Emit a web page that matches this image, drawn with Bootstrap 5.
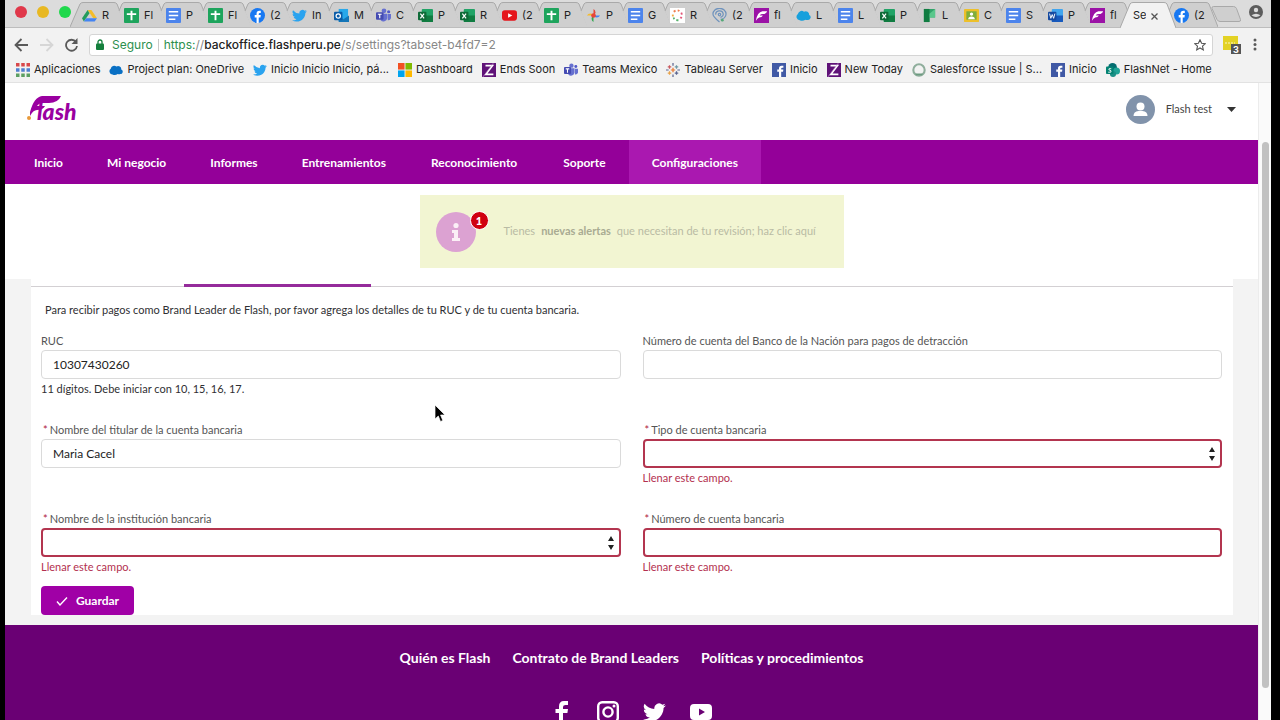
<!DOCTYPE html>
<html lang="es">
<head>
<meta charset="utf-8">
<meta name="viewport" content="width=device-width, initial-scale=1">
<title>Configuraciones</title>
<link rel="stylesheet" href="https://cdn.jsdelivr.net/npm/bootstrap@5.3.0/dist/css/bootstrap.min.css">
<style>
body{font-family:Lato,"Liberation Sans",sans-serif;font-size:12px;color:#2f2f33;background:#000}
a{text-decoration:none;color:inherit}
.win{height:100vh;margin:0 9px 0 5px;overflow:hidden;background:#fff}
/* browser window */
.chrome{font-family:Inter,"Liberation Sans",sans-serif;background:#f2f2f2;border-bottom:1px solid #e2e2e2;font-size:11px;color:#222}
.strip{height:28px;background:#dcdcdc;border-bottom:1px solid #bdbdbd}
.lights{width:67px;gap:10px;padding:0 0 4px 10px}
.lights i{width:12px;height:12px;border-radius:50%}
.tabitem{position:relative;flex:0 1 42px;min-width:0;height:27px;padding:4px 0 0 10px;gap:5px}
.tabitem .shape{position:absolute;left:-2px;top:0;width:56px;height:27px}
.tabitem .fav{position:relative}
.tabitem .ttl{position:relative;width:11px;overflow:hidden;white-space:nowrap;font-size:11px}
.tabitem.on{z-index:2;padding-left:11px}
.tabitem.on .shape{height:28px}
.tabitem.on .ttl{width:13px}
.tabitem.on button{position:relative;border:0;background:none;padding:0;line-height:1}
.fav{width:15px;height:15px;flex:none}
.tools{height:33px;padding:0 14px 0 9px;gap:10px}
.tools button,.who{border:0;background:none;padding:0;line-height:0}
.urlbar{height:22px;background:#fff;border:1px solid #d5d5d5;border-radius:3px;padding:0 6px;font-size:12px}
.urlbar .vr{margin:4px 5px}
.urlbar a{color:#888}.urlbar b{font-weight:500;color:#222}.ok{color:#2c8f4e}
.marks{height:21px;padding:0 11px 4px;gap:9px;white-space:nowrap}
.marks a{gap:4px}
.marks .fav{width:14px;height:14px}
/* site */
.pane{min-width:0}
.sitehead{height:57px;padding:0 22px 5px 22px}
.account{font-size:11px;color:#444}
.account span{margin:0 15px 0 11px}
.sitenav{background:#940099;height:44px;padding-left:7px}
.sitenav .nav-link{color:#fff;font-weight:700;font-size:12px;padding:1px 22px 0;border-radius:0;line-height:43px}
.sitenav .nav-link:nth-child(n+5){padding:1px 23px 0}
.sitenav .nav-link.active{background:#aa18b0}
.notice{width:424px;height:73px;background:#f2f5d2;margin:11px auto;padding:0 16px;color:#b9bba4;font-size:11px}
.notice b{color:#a9ab92;margin:0 6px}
.info-ic{position:relative;width:40px;height:40px;margin-right:28px}
.count{position:absolute;right:-13px;top:-1px;width:19px;height:19px;border-radius:50%;background:#d00010;color:#fff;border:1px solid #fff;font-size:11px;font-weight:900;line-height:17px;text-align:center}
.ground{background:#f3f3f3}
.sheet{margin:0 25px 10px 26px;background:#fff}
.tabrow{height:8px;border-bottom:1px solid #d3d0d3}
.tabrow i{display:block;width:187px;height:3px;margin-top:5px;background:#952b9b}
.sheet form{padding:14px 11px 0 10px}
.lead-in{line-height:18px;padding-left:4px;margin-bottom:14px;font-size:11px}
.fieldbox{height:65px;margin-bottom:24px;font-size:11px;line-height:16px}
.fieldbox label{display:block;color:#555;margin-bottom:1px}
.fieldbox .form-control,.fieldbox .form-select{height:29px;min-height:29px;border:1px solid #dadada;border-radius:4px;padding:0 11px;font-size:12px;color:#222;background-color:#fff}
.fieldbox .form-select{background-image:url("data:image/svg+xml,%3Csvg xmlns='http://www.w3.org/2000/svg' viewBox='0 0 6 16'%3E%3Cpath d='M3 1l3 5H0zM3 15l3-5H0z' fill='%23222'/%3E%3C/svg%3E");background-size:6px 16px;background-position:right 5px center}
.fieldbox .bad{border:2px solid #b3354f}
.req{color:#b02040;padding:0 2px}
.msg{line-height:16px;margin-top:2px}
.msg.err{color:#b3304f}
.last{margin-bottom:10px}
.save{height:29px;width:93px;padding:0;background:#a000a6;border:0;border-radius:4px;color:#fff;font-size:12px;font-weight:700;gap:8px}
.sitefoot{background:#6a0074;color:#fff;padding-top:23px;flex:1}
.footlinks{gap:22px;font-size:14px;font-weight:700;line-height:20px;margin-bottom:33px}
.social{gap:24px}
.scroller{width:13px;background:#fafafa;border-left:1px solid #ececec;padding:59px 2px 32px 3px}
.scroller i{background:#c1c1c1;border-radius:4px}
.pointer{position:absolute;left:434px;top:404px}
</style>
</head>
<body>
<svg width="0" height="0" class="position-absolute" aria-hidden="true"><defs>
<symbol id="tab" viewBox="0 0 56 27" preserveAspectRatio="none"><path d="M13 27L7 11l3-7q1-1.500 3-1.500h31q2 0 3 1.500l9 23z" fill="#cfcfcf"/><path d="M7 11l3-7q1-1.500 3-1.500h31q2 0 3 1.500l9 23" fill="none" stroke="#a9a9a9"/></symbol>
<symbol id="tab1" viewBox="0 0 56 27"><path d="M0 27L10 4q1-1.500 3-1.500h31q2 0 3 1.500l9 23" fill="#cfcfcf" stroke="#a9a9a9"/></symbol>
<symbol id="tabon" viewBox="0 0 56 28" preserveAspectRatio="none"><path d="M0 28L10 4q1-1.500 3-1.500h31q2 0 3 1.500l9 24" fill="#f2f2f2" stroke="#a9a9a9"/></symbol>
<symbol id="drive" viewBox="0 0 16 16"><path d="M6 2h4l6 9h-4z" fill="#f4bd2a"/><path d="M6 2L0 11l2 3.500L8 5.500z" fill="#249c5b"/><path d="M2 14.500h11.500L16 11H4.500z" fill="#4384f3"/></symbol>
<symbol id="sheets" viewBox="0 0 16 16"><rect width="16" height="16" rx="1" fill="#1da45c"/><path d="M8 3v10M3 6.500h10" stroke="#fff" stroke-width="2"/></symbol>
<symbol id="docs" viewBox="0 0 16 16"><rect width="16" height="16" rx="1" fill="#4c84ec"/><path d="M3 4h10M3 8h10M3 12h7" stroke="#fff" stroke-width="1.700"/></symbol>
<symbol id="fbr" viewBox="0 0 16 16"><circle cx="8" cy="8" r="8" fill="#1778f2"/><path d="M7 16v-6H5V7.500h2V6q0-3 3-3h1.500v2.200h-1Q9.300 5.200 9.300 6.400v1.100h2.200L11.200 10H9.300v6z" fill="#fff"/></symbol>
<symbol id="bird" viewBox="0 0 16 13"><path d="M5 13c6 0 9.300-5 9.300-9.200L16 2l-1.900.5L15.500.7l-2 .8A3.300 3.300 0 0 0 7.900 4.400 9.300 9.300 0 0 1 1.100.8a3.300 3.300 0 0 0 1 4.400l-1.500-.4a3.300 3.300 0 0 0 2.600 3.200l-1.500.1a3.300 3.300 0 0 0 3.100 2.300A6.600 6.600 0 0 1 0 11.600 9 9 0 0 0 5 13z"/></symbol>
<symbol id="outlook" viewBox="0 0 16 16"><rect x="5" y="1" width="10" height="13" fill="#28a8ea"/><path d="M5 8l5 4 6-4v7H5z" fill="#1476b8"/><rect y="4" width="9" height="9" rx="1" fill="#0a5ca8"/><circle cx="4.500" cy="8.500" r="2.300" fill="none" stroke="#fff" stroke-width="1.300"/></symbol>
<symbol id="teams" viewBox="0 0 16 16"><circle cx="8.500" cy="3" r="2.500" fill="#6670d0"/><circle cx="13.500" cy="4" r="1.700" fill="#5059c9"/><path d="M5 6h7v5a4 4 0 0 1-7 2zM12.500 6.500H16V11q-1 2.500-3.500 2z" fill="#6670d0"/><rect y="4.500" width="8" height="8" rx="1" fill="#444bb2"/><path d="M2 6.700h4M4 6.700v4.300" stroke="#fff" stroke-width="1.200"/></symbol>
<symbol id="excel" viewBox="0 0 16 16"><rect x="4" y="1" width="12" height="14" rx="1" fill="#21a366"/><path d="M10 8h6v6q0 1-1 1H5q-1 0-1-1V8z" fill="#107c41"/><rect y="4" width="9" height="9" rx="1" fill="#0e6b38"/><path d="M2.500 6l4 5M6.500 6l-4 5" stroke="#fff" stroke-width="1.300"/></symbol>
<symbol id="yt" viewBox="0 0 16 16"><rect y="2.500" width="16" height="11" rx="3" fill="#e5161c"/><path d="M6.500 5.500v5L11 8z" fill="#fff"/></symbol>
<symbol id="photos" viewBox="0 0 16 16"><path d="M8 8V1a4 4 0 0 1 0 7z" fill="#e84639"/><path d="M8 8h7a4 4 0 0 1-7 0z" fill="#4285f4"/><path d="M8 8v7a4 4 0 0 1 0-7z" fill="#34a853"/><path d="M8 8H1a4 4 0 0 1 7 0z" fill="#f6bb2b"/><circle cx="8" cy="8" r="2.500" fill="#e84639"/></symbol>
<symbol id="dots" viewBox="0 0 16 16"><rect width="16" height="16" fill="#fff"/><g fill="none" stroke-width="2" stroke-dasharray="2 2.500"><path d="M4 4q4-3 7 0" stroke="#ef7b4d"/><path d="M12 5q2 4-2 7" stroke="#e25577"/><path d="M9 13q-5 0-5-3" stroke="#57b36d"/><path d="M3 9V5" stroke="#f2a93b"/></g></symbol>
<symbol id="swirl" viewBox="0 0 16 16"><g fill="none" stroke="#6f93bd" stroke-width="1.300"><path d="M8 15C3 11 1 9 1 6.500a6.800 6 0 0 1 14 0C15 10 12 12 9 12M4 7a4 3.500 0 1 1 5 3"/><circle cx="8" cy="7" r="1.300"/></g><circle cx="11" cy="13" r="1.500" fill="#55a878"/></symbol>
<symbol id="flashic" viewBox="0 0 16 16"><rect width="16" height="16" fill="#9b12a6"/><path d="M2 13.500Q3.500 4.500 9 3.500h5q-1 3-4.500 3-2.500 0-3.500 1.500h3.500q-1 2-4 2-2 1-3.500 3.500z" fill="#fff"/></symbol>
<symbol id="cloud" viewBox="0 0 16 16"><path d="M4 13a3.600 3.600 0 0 1-2-6.500A4 4 0 0 1 8.500 4a3.600 3.600 0 0 1 5.500 3.500 2.700 2.700 0 0 1-1 5.200q-2 .5-3-.2-3 2-6 .5z"/></symbol>
<symbol id="planner" viewBox="0 0 16 16"><path d="M2 1h12v9H8v5H2z" fill="#31a36a"/><path d="M2 1h6v14H2z" fill="#107c41"/><path d="M8 6l6-5v9H8z" fill="#5ac78c"/></symbol>
<symbol id="classroom" viewBox="0 0 16 16"><rect y="1" width="16" height="14" rx="1" fill="#edc02a"/><rect x="2.500" y="3.500" width="11" height="9" fill="#7fae3d"/><circle cx="8" cy="6.500" r="1.800" fill="#fff"/><path d="M4.500 12q0-3 3.500-3t3.500 3z" fill="#fff"/></symbol>
<symbol id="word" viewBox="0 0 16 16"><rect x="4" y="1" width="12" height="14" rx="1" fill="#41a5ee"/><path d="M4 8h12v6q0 1-1 1H5q-1 0-1-1z" fill="#185abd"/><rect y="4" width="9" height="9" rx="1" fill="#1549a0"/><path d="M1.700 6l1.300 5 1.500-4L6 11l1.300-5" fill="none" stroke="#fff"/></symbol>
<symbol id="ms" viewBox="0 0 16 16"><path d="M0 0h7.500v7.500H0z" fill="#f25022"/><path d="M8.500 0H16v7.500H8.500z" fill="#7fba00"/><path d="M0 8.500h7.500V16H0z" fill="#00a4ef"/><path d="M8.500 8.500H16V16H8.500z" fill="#ffb900"/></symbol>
<symbol id="zed" viewBox="0 0 16 16"><rect width="16" height="16" fill="#5f1278"/><path d="M4 3h8L4.500 13H13" fill="none" stroke="#fff" stroke-width="1.900"/><path d="M1 16L13 0" stroke="#d9a9e0" stroke-width=".6"/></symbol>
<symbol id="tableau" viewBox="0 0 16 16"><g stroke-width="1.400"><path d="M8 5.500v5M5.500 8h5" stroke="#e8762d"/><path d="M4 2.500v4M2 4.500h4" stroke="#c9595f"/><path d="M12 2.500v4M10 4.500h4" stroke="#7099a5"/><path d="M4 9.500v4M2 11.500h4" stroke="#e9a34a"/><path d="M12 9.500v4M10 11.500h4M8 0v3M8 13v3M0 8h3M13 8h3" stroke="#5b6591"/></g></symbol>
<symbol id="fbs" viewBox="0 0 16 16"><rect width="16" height="16" fill="#4059a5"/><path d="M8 16v-6H6V7.500h2V6q0-3 3-3h2v2.300h-1.200q-1.300 0-1.300 1.100v1.100H13l-.4 2.500h-2.100v6z" fill="#fff"/></symbol>
<symbol id="ring" viewBox="0 0 16 16"><circle cx="8" cy="8" r="6.500" fill="none" stroke="#8fae9c" stroke-width="2.400"/><path d="M4 13l8 0" stroke="#6c9b80" stroke-width="2"/></symbol>
<symbol id="share" viewBox="0 0 16 16"><circle cx="7.500" cy="5" r="5" fill="#036c70"/><circle cx="12" cy="9" r="4" fill="#1fa396"/><circle cx="8" cy="12.500" r="3.500" fill="#1a8f85"/><rect y="4" width="8.500" height="8.500" rx="1" fill="#038373"/><path d="M6 6.500H3.500q-1 1.600 1 1.800T5.500 10.500H2.500" fill="none" stroke="#fff"/></symbol>
<symbol id="apps" viewBox="0 0 16 16"><path d="M0 2h16" stroke="#d8484b" stroke-width="4" stroke-dasharray="4 2"/><path d="M0 8h16" stroke="#4f7fd0" stroke-width="4" stroke-dasharray="4 2"/><path d="M0 14h16" stroke="#5c9f62" stroke-width="4" stroke-dasharray="4 2"/></symbol>
</defs></svg>

<div class="win d-flex flex-column">
<header class="chrome flex-shrink-0">
 <div class="strip d-flex">
  <div class="lights d-flex align-items-center flex-shrink-0"><i style="background:#e0384a"></i><i style="background:#e8b822"></i><i style="background:#1fd84c"></i></div>
  <div class="d-flex flex-grow-1" style="min-width:0">
   <div class="tabitem d-flex align-items-center"><svg class="shape"><use href="#tab1"/></svg><svg class="fav"><use href="#drive"/></svg><span class="ttl">R</span></div>
   <div class="tabitem d-flex align-items-center"><svg class="shape"><use href="#tab"/></svg><svg class="fav"><use href="#sheets"/></svg><span class="ttl">Fl</span></div>
   <div class="tabitem d-flex align-items-center"><svg class="shape"><use href="#tab"/></svg><svg class="fav"><use href="#docs"/></svg><span class="ttl">P</span></div>
   <div class="tabitem d-flex align-items-center"><svg class="shape"><use href="#tab"/></svg><svg class="fav"><use href="#sheets"/></svg><span class="ttl">Fl</span></div>
   <div class="tabitem d-flex align-items-center"><svg class="shape"><use href="#tab"/></svg><svg class="fav"><use href="#fbr"/></svg><span class="ttl">(2</span></div>
   <div class="tabitem d-flex align-items-center"><svg class="shape"><use href="#tab"/></svg><svg class="fav" fill="#2aa3ef"><use href="#bird"/></svg><span class="ttl">In</span></div>
   <div class="tabitem d-flex align-items-center"><svg class="shape"><use href="#tab"/></svg><svg class="fav"><use href="#outlook"/></svg><span class="ttl">M</span></div>
   <div class="tabitem d-flex align-items-center"><svg class="shape"><use href="#tab"/></svg><svg class="fav"><use href="#teams"/></svg><span class="ttl">C</span></div>
   <div class="tabitem d-flex align-items-center"><svg class="shape"><use href="#tab"/></svg><svg class="fav"><use href="#excel"/></svg><span class="ttl">P</span></div>
   <div class="tabitem d-flex align-items-center"><svg class="shape"><use href="#tab"/></svg><svg class="fav"><use href="#excel"/></svg><span class="ttl">R</span></div>
   <div class="tabitem d-flex align-items-center"><svg class="shape"><use href="#tab"/></svg><svg class="fav"><use href="#yt"/></svg><span class="ttl">(2</span></div>
   <div class="tabitem d-flex align-items-center"><svg class="shape"><use href="#tab"/></svg><svg class="fav"><use href="#sheets"/></svg><span class="ttl">P</span></div>
   <div class="tabitem d-flex align-items-center"><svg class="shape"><use href="#tab"/></svg><svg class="fav"><use href="#photos"/></svg><span class="ttl">P</span></div>
   <div class="tabitem d-flex align-items-center"><svg class="shape"><use href="#tab"/></svg><svg class="fav"><use href="#docs"/></svg><span class="ttl">G</span></div>
   <div class="tabitem d-flex align-items-center"><svg class="shape"><use href="#tab"/></svg><svg class="fav"><use href="#dots"/></svg><span class="ttl">R</span></div>
   <div class="tabitem d-flex align-items-center"><svg class="shape"><use href="#tab"/></svg><svg class="fav"><use href="#swirl"/></svg><span class="ttl">(2</span></div>
   <div class="tabitem d-flex align-items-center"><svg class="shape"><use href="#tab"/></svg><svg class="fav"><use href="#flashic"/></svg><span class="ttl">fl</span></div>
   <div class="tabitem d-flex align-items-center"><svg class="shape"><use href="#tab"/></svg><svg class="fav" fill="#18a0dc"><use href="#cloud"/></svg><span class="ttl">L</span></div>
   <div class="tabitem d-flex align-items-center"><svg class="shape"><use href="#tab"/></svg><svg class="fav"><use href="#docs"/></svg><span class="ttl">L</span></div>
   <div class="tabitem d-flex align-items-center"><svg class="shape"><use href="#tab"/></svg><svg class="fav"><use href="#excel"/></svg><span class="ttl">P</span></div>
   <div class="tabitem d-flex align-items-center"><svg class="shape"><use href="#tab"/></svg><svg class="fav"><use href="#planner"/></svg><span class="ttl">L</span></div>
   <div class="tabitem d-flex align-items-center"><svg class="shape"><use href="#tab"/></svg><svg class="fav"><use href="#classroom"/></svg><span class="ttl">C</span></div>
   <div class="tabitem d-flex align-items-center"><svg class="shape"><use href="#tab"/></svg><svg class="fav"><use href="#docs"/></svg><span class="ttl">S</span></div>
   <div class="tabitem d-flex align-items-center"><svg class="shape"><use href="#tab"/></svg><svg class="fav"><use href="#word"/></svg><span class="ttl">P</span></div>
   <div class="tabitem d-flex align-items-center"><svg class="shape"><use href="#tab"/></svg><svg class="fav"><use href="#flashic"/></svg><span class="ttl">fl</span></div>
   <div class="tabitem on d-flex align-items-center"><svg class="shape"><use href="#tabon"/></svg><span class="ttl">Se</span><button aria-label="Cerrar pestaña"><svg width="7" height="7" viewBox="0 0 7 7"><path d="M.5.5l6 6M6.500.5l-6 6" stroke="#555" stroke-width="1.300"/></svg></button></div>
   <div class="tabitem d-flex align-items-center"><svg class="shape"><use href="#tab"/></svg><svg class="fav"><use href="#fbr"/></svg><span class="ttl">(2</span></div>
  </div>
  <button class="who d-flex align-items-center pe-2" aria-label="Nueva pestaña"><svg width="30" height="16" viewBox="0 0 30 16"><path d="M2.500.5h20q2 0 3 2l4 11q.5 2-1.500 2H9q-2 0-3-2L1 2.500q-.5-2 1.500-2z" fill="#cfcfcf" stroke="#a9a9a9"/></svg></button>
  <button class="who pe-2 pb-1" aria-label="Perfil"><svg width="14" height="14" viewBox="0 0 14 14"><circle cx="7" cy="7" r="7" fill="#5c5c5c"/><circle cx="7" cy="5" r="2.200" fill="#dcdcdc"/><path d="M2.500 10.300Q7 7 11.500 10.300 9.500 12 7 12t-4.500-1.700z" fill="#dcdcdc"/></svg></button>
 </div>
 <div class="tools d-flex align-items-center">
  <button aria-label="Atrás"><svg width="15" height="14" viewBox="0 0 15 14"><path d="M14 7H2M7.500 1L1.500 7l6 6" fill="none" stroke="#5a5a5a" stroke-width="1.800"/></svg></button>
  <button aria-label="Adelante"><svg width="15" height="14" viewBox="0 0 15 14"><path d="M1 7h12M7.500 1l6 6-6 6" fill="none" stroke="#d6d6d6" stroke-width="1.800"/></svg></button>
  <button aria-label="Recargar"><svg width="15" height="14" viewBox="0 0 15 14"><path d="M12 4A5.500 5.500 0 1 0 13 8" fill="none" stroke="#5a5a5a" stroke-width="1.800"/><path d="M13.500 0v6h-6z" fill="#5a5a5a"/></svg></button>
  <div class="urlbar flex-grow-1 d-flex align-items-center"><svg width="8" height="11" viewBox="0 0 8 11" class="me-2"><rect y="4.500" width="8" height="6.500" rx="1" fill="#15803d"/><path d="M2 5V3a2 2 0 0 1 4 0v2" fill="none" stroke="#15803d" stroke-width="1.300"/></svg><span class="ok">Seguro</span><div class="vr"></div><a href="#"><span class="ok">https:</span>//<b>backoffice.flashperu.pe</b>/s/settings?tabset-b4fd7=2</a>
   <button class="ms-auto" aria-label="Favorito"><svg width="12" height="12" viewBox="0 0 12 12"><path d="M6 .8l1.600 3.500 3.700.4-2.800 2.500.8 3.700L6 9l-3.300 1.900.8-3.700L.7 4.700l3.700-.4z" fill="none" stroke="#555" stroke-width="1.100"/></svg></button></div>
  <svg width="20" height="18" viewBox="0 0 20 18"><rect width="15" height="14" fill="#e3d224"/><path d="M2 7h10" stroke="#f4ec90" stroke-width="1.500" stroke-dasharray="2 1"/><rect x="8" y="8" width="10" height="10" fill="#555"/><text x="13" y="16.500" font-size="9" font-weight="700" fill="#fff" text-anchor="middle">3</text></svg>
  <button aria-label="Menú"><svg width="4" height="13" viewBox="0 0 4 13"><g fill="#5a5a5a"><circle cx="2" cy="2" r="1.500"/><circle cx="2" cy="6.500" r="1.500"/><circle cx="2" cy="11" r="1.500"/></g></svg></button>
 </div>
 <nav class="marks d-flex align-items-center">
  <a href="#" class="d-flex align-items-center"><svg class="fav"><use href="#apps"/></svg>Aplicaciones</a>
  <a href="#" class="d-flex align-items-center"><svg class="fav" fill="#0a70c4"><use href="#cloud"/></svg>Project plan: OneDrive</a>
  <a href="#" class="d-flex align-items-center"><svg class="fav" fill="#2aa3ef"><use href="#bird"/></svg>Inicio Inicio Inicio, pá...</a>
  <a href="#" class="d-flex align-items-center"><svg class="fav"><use href="#ms"/></svg>Dashboard</a>
  <a href="#" class="d-flex align-items-center"><svg class="fav"><use href="#zed"/></svg>Ends Soon</a>
  <a href="#" class="d-flex align-items-center"><svg class="fav"><use href="#teams"/></svg>Teams Mexico</a>
  <a href="#" class="d-flex align-items-center"><svg class="fav"><use href="#tableau"/></svg>Tableau Server</a>
  <a href="#" class="d-flex align-items-center"><svg class="fav"><use href="#fbs"/></svg>Inicio</a>
  <a href="#" class="d-flex align-items-center"><svg class="fav"><use href="#zed"/></svg>New Today</a>
  <a href="#" class="d-flex align-items-center"><svg class="fav"><use href="#ring"/></svg>Salesforce Issue | S...</a>
  <a href="#" class="d-flex align-items-center"><svg class="fav"><use href="#fbs"/></svg>Inicio</a>
  <a href="#" class="d-flex align-items-center"><svg class="fav"><use href="#share"/></svg>FlashNet - Home</a>
 </nav>
</header>

<div class="d-flex flex-grow-1 overflow-hidden">
<div class="pane flex-grow-1 d-flex flex-column">
 <div class="sitehead d-flex align-items-center justify-content-between flex-shrink-0">
  <a href="#" aria-label="Flash"><svg width="54" height="30" viewBox="0 0 54 30"><path d="M3 18Q7 3 15 2h19q-3 7-12 7h-6q-4 0-6 3h8q-2 4-8 4-4 0-7 6z" fill="#9a00a0"/><text x="10" y="26" font-family="Lato" font-size="23" font-weight="900" font-style="italic" fill="#9a00a0">lash</text><circle cx="2" cy="24" r="2" fill="#e89a3c"/></svg></a>
  <div class="dropdown"><button class="btn account p-0 border-0 d-flex align-items-center" data-bs-toggle="dropdown"><svg width="29" height="29" viewBox="0 0 29 29"><circle cx="14.500" cy="14.500" r="14.500" fill="#8193ab"/><circle cx="14.500" cy="11.500" r="4" fill="#fff"/><path d="M7.500 21q0-4.500 5-5h4q5 .5 5 5z" fill="#fff"/></svg><span>Flash test</span><svg width="9" height="5" viewBox="0 0 9 5"><path d="M0 0h9L4.500 5z" fill="#333"/></svg></button></div>
 </div>
 <nav class="sitenav nav flex-nowrap flex-shrink-0">
  <a class="nav-link" href="#">Inicio</a><a class="nav-link" href="#">Mi negocio</a><a class="nav-link" href="#">Informes</a><a class="nav-link" href="#">Entrenamientos</a><a class="nav-link" href="#">Reconocimiento</a><a class="nav-link" href="#">Soporte</a><a class="nav-link active" href="#">Configuraciones</a>
 </nav>
 <a href="#" class="notice d-flex align-items-center flex-shrink-0">
  <span class="info-ic"><svg width="40" height="40" viewBox="0 0 40 40"><circle cx="20" cy="20" r="20" fill="#dca2d2"/><g fill="#fbeff6"><circle cx="20" cy="13.500" r="2.600"/><path d="M16 18h6v8h2v3h-8v-3h2v-5h-2z"/></g></svg><span class="count">1</span></span>
  <span class="text-nowrap">Tienes<b>nuevas alertas</b>que necesitan de tu revisión; haz clic aquí</span>
 </a>
 <main class="ground">
  <div class="sheet">
   <div class="tabrow d-flex"><i style="margin-left:153px"></i></div>
   <form>
    <p class="lead-in">Para recibir pagos como Brand Leader de Flash, por favor agrega los detalles de tu RUC y de tu cuenta bancaria.</p>
    <div class="row" style="--bs-gutter-x:22px">
     <div class="col-6"><div class="fieldbox"><label for="ruc">RUC</label><input id="ruc" class="form-control" value="10307430260"><div class="msg">11 dígitos. Debe iniciar con 10, 15, 16, 17.</div></div></div>
     <div class="col-6"><div class="fieldbox"><label for="det">Número de cuenta del Banco de la Nación para pagos de detracción</label><input id="det" class="form-control"></div></div>
     <div class="col-6"><div class="fieldbox"><label for="tit"><span class="req">*</span>Nombre del titular de la cuenta bancaria</label><input id="tit" class="form-control" value="Maria Cacel"></div></div>
     <div class="col-6"><div class="fieldbox"><label for="tipo"><span class="req">*</span>Tipo de cuenta bancaria</label><select id="tipo" class="form-select bad"><option></option></select><div class="msg err">Llenar este campo.</div></div></div>
     <div class="col-6"><div class="fieldbox last"><label for="inst"><span class="req">*</span>Nombre de la institución bancaria</label><select id="inst" class="form-select bad"><option></option></select><div class="msg err">Llenar este campo.</div></div></div>
     <div class="col-6"><div class="fieldbox last"><label for="num"><span class="req">*</span>Número de cuenta bancaria</label><input id="num" class="form-control bad"><div class="msg err">Llenar este campo.</div></div></div>
    </div>
    <button type="button" class="btn save d-flex align-items-center justify-content-center"><svg width="12" height="10" viewBox="0 0 12 10"><path d="M1 5.500L4 9l7-7.500" fill="none" stroke="#fff" stroke-width="1.400"/></svg>Guardar</button>
   </form>
  </div>
 </main>
 <footer class="sitefoot">
  <div class="footlinks d-flex justify-content-center"><a href="#">Quién es Flash</a><a href="#">Contrato de Brand Leaders</a><a href="#">Políticas y procedimientos</a></div>
  <div class="social d-flex justify-content-center">
   <a href="#" aria-label="Facebook"><svg width="22" height="22" viewBox="0 0 22 22"><path d="M8 22V12H4.500V8H8V5.500Q8 0 13 0h4v4h-2.500Q12 4 12 6v2h5l-.6 4H12v10z" fill="#fff"/></svg></a>
   <a href="#" aria-label="Instagram"><svg width="22" height="22" viewBox="0 0 22 22"><rect x="1.200" y="1.200" width="19.600" height="19.600" rx="4" fill="none" stroke="#fff" stroke-width="2.400"/><circle cx="11" cy="11" r="4.600" fill="none" stroke="#fff" stroke-width="2.400"/><circle cx="17" cy="5" r="1.500" fill="#fff"/></svg></a>
   <a href="#" aria-label="Twitter"><svg width="23" height="22" fill="#fff"><use href="#bird"/></svg></a>
   <a href="#" aria-label="YouTube"><svg width="22" height="22" viewBox="0 0 22 22"><path fill-rule="evenodd" d="M4 3h14q4 0 4 4v8q0 4-4 4H4q-4 0-4-4V7q0-4 4-4zm5 4.500v7l6-3.500z" fill="#fff"/></svg></a>
  </div>
 </footer>
</div>
<div class="scroller d-flex flex-shrink-0"><i class="flex-grow-1"></i></div>
</div>
</div>
<svg class="pointer" width="12" height="19" viewBox="0 0 12 19"><path d="M1 1v14l3.300-3 2.200 5.500 2.300-1L6.600 11H11z" fill="#000" stroke="#fff" stroke-width=".7"/></svg>
<script src="https://cdn.jsdelivr.net/npm/bootstrap@5.3.0/dist/js/bootstrap.bundle.min.js"></script>
</body>
</html>
